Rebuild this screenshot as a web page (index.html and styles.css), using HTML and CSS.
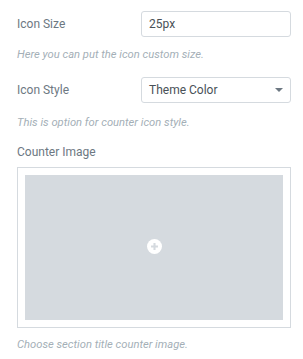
FILE: index.html
```html
<!DOCTYPE html>
<html>
<head>
<meta charset="utf-8">
<link rel="stylesheet" href="styles.css">
</head>
<body>
<div class="panel">
  <div class="control">
    <div class="row">
      <label class="label">Icon Size</label>
      <div class="input">25px</div>
    </div>
    <div class="desc">Here you can put the icon custom size.</div>
  </div>
  <div class="control second">
    <div class="row">
      <label class="label">Icon Style</label>
      <div class="input select">
        <span>Theme Color</span>
        <svg class="caret" width="8" height="4" viewBox="0 0 8 4"><path d="M0 0h8L4 4z" fill="#6d7882"/></svg>
      </div>
    </div>
    <div class="desc desc2">This is option for counter icon style.</div>
  </div>
  <div class="control media">
    <div class="label">Counter Image</div>
    <div class="media-box">
      <div class="media-inner">
        <svg width="15" height="15" viewBox="0 0 16 16"><circle cx="8" cy="8" r="8" fill="#fff"/><path d="M8 4.3v7.4M4.3 8h7.4" stroke="#d5dadf" stroke-width="2.2"/></svg>
      </div>
    </div>
    <div class="desc desc3">Choose section title counter image.</div>
  </div>
</div>
</body>
</html>
```
FILE: styles.css
```css
html, body { margin: 0; padding: 0; background: #fff; }
body { font-family: Roboto, "Noto Sans", sans-serif; }
.panel { padding: 11px 12px 0 17px; width: 274px; }
.control { display: flex; flex-direction: column; }
.row { display: flex; align-items: center; justify-content: space-between; }
.label { font-size: 12px; line-height: 15px; color: #6d7882; }
.input {
  box-sizing: border-box;
  width: 150px; height: 26px;
  border: 1px solid #d5dadf; border-radius: 3px;
  font-size: 12px; color: #495157;
  display: flex; align-items: center; padding: 0 7px;
}
.select { justify-content: space-between; padding-right: 7px; }
.desc { font-size: 11.2px; line-height: 13px; font-style: italic; color: #a4afb7; margin-top: 11px; }
.second { margin-top: 16px; }
.desc2 { margin-top: 13px; }
.media { margin-top: 16px; }
.media .label { margin-bottom: 7px; }
.media-box { border: 1px solid #d5dadf; padding: 7px; }
.media-inner { background: #d5dadf; height: 145px; display: flex; align-items: center; justify-content: center; padding-bottom: 2px; box-sizing: border-box; }
.desc3 { margin-top: 10px; }
```
